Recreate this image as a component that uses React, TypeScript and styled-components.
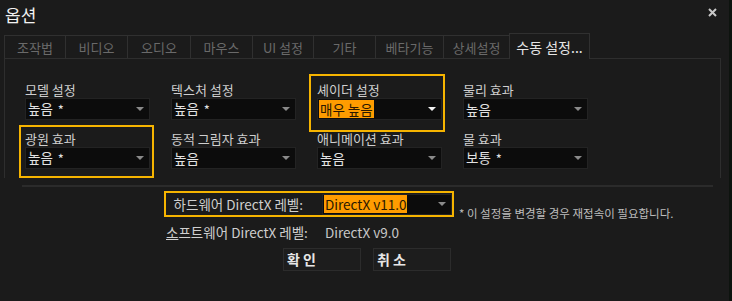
import styled, { createGlobalStyle } from "styled-components";

const GlobalStyle = createGlobalStyle`
  body {
    margin: 0;
    background: #0d130e;
    font-family: "Noto Sans CJK KR", "Noto Sans", sans-serif;
  }
`;

const Window = styled.div`
  width: 729px;
  height: 301px;
  background: #1b1b1b;
  display: flex;
  flex-direction: column;
  overflow: hidden;
`;

const TitleBar = styled.div`
  height: 35px;
  display: flex;
  justify-content: space-between;
  align-items: flex-start;
  padding: 0 12px 0 5px;
  box-sizing: border-box;
`;

const Title = styled.div`
  font-size: 17px;
  line-height: 20px;
  padding-top: 5px;
  color: #f2f2f2;
`;

const Close = styled.svg`
  margin-top: 8px;
`;

const TabBar = styled.div`
  display: flex;
  align-items: flex-end;
  height: 23px;
  margin-left: 4px;
`;

const Tab = styled.div<{ $w: number; $active?: boolean }>`
  width: ${(p) => p.$w}px;
  height: ${(p) => (p.$active ? 26 : 23)}px;
  box-sizing: border-box;
  margin-left: -1px;
  margin-bottom: ${(p) => (p.$active ? -1 : 0)}px;
  position: relative;
  z-index: ${(p) => (p.$active ? 1 : 0)};
  border: 1px solid #303030;
  border-bottom: none;
  background: #1b1b1b;
  display: flex;
  align-items: center;
  justify-content: center;
  font-size: ${(p) => (p.$active ? 14 : 13)}px;
  color: ${(p) => (p.$active ? "#e6e6e6" : "#6a6a6a")};
  white-space: nowrap;
  &:first-child {
    margin-left: 0;
  }
`;

const Panel = styled.div`
  margin: 0 8px 0 4px;
  height: 120px;
  box-sizing: border-box;
  border: 1px solid #2e2e2e;
  border-bottom: none;
  padding: 23px 0 0 20px;
  display: grid;
  grid-template-columns: repeat(4, 125px);
  grid-auto-rows: 38px;
  column-gap: 21px;
  row-gap: 11px;
`;

const Cell = styled.div<{ $frame?: string }>`
  position: relative;
  display: flex;
  flex-direction: column;
  &::after {
    content: "";
    display: ${(p) => (p.$frame ? "block" : "none")};
    position: absolute;
    inset: ${(p) => p.$frame || "0"};
    border: 2px solid #f6b400;
    pointer-events: none;
  }
`;

const Label = styled.div`
  font-size: 13px;
  line-height: 16px;
  color: #cfcfcf;
  white-space: nowrap;
`;

const Select = styled.div<{ $w?: number; $h?: number }>`
  width: ${(p) => (p.$w ? `${p.$w}px` : "100%")};
  height: ${(p) => p.$h || 22}px;
  box-sizing: border-box;
  background: #0c0c0c;
  border: 1px solid #232323;
  display: flex;
  align-items: center;
  justify-content: space-between;
  padding: 0 5px 0 1px;
`;

const Value = styled.span<{ $hot?: boolean }>`
  font-size: 13.5px;
  line-height: 18px;
  color: ${(p) => (p.$hot ? "#2a1800" : "#e2e2e2")};
  background: ${(p) => (p.$hot ? "#ff9c00" : "transparent")};
  padding: 0 1px;
  white-space: nowrap;
`;

const Star = styled.span`
  font-size: 13px;
  margin-left: 5px;
  vertical-align: -1px;
`;

const Arrow = styled.span<{ $bright?: boolean }>`
  width: 0;
  height: 0;
  border-left: 4px solid transparent;
  border-right: 4px solid transparent;
  border-top: 4px solid ${(p) => (p.$bright ? "#f2f2f2" : "#8a8a8a")};
`;

const Separator = styled.div`
  margin: 7px 16px 0 22px;
  height: 2px;
  background: #2b2b2b;
`;

const Lower = styled.div`
  padding-left: 164px;
  display: flex;
  flex-direction: column;
`;

const DxRow = styled.div<{ $gap: number }>`
  display: flex;
  align-items: flex-end;
  margin-top: ${(p) => p.$gap}px;
`;

const DxBox = styled.div<{ $hot?: boolean }>`
  width: 290px;
  height: 26px;
  box-sizing: border-box;
  border: 2px solid ${(p) => (p.$hot ? "#f6b400" : "transparent")};
  display: flex;
  align-items: center;
`;

const DxLabel = styled.div`
  width: 137px;
  text-align: right;
  font-size: 13.5px;
  color: #cfcfcf;
  white-space: nowrap;
  margin-right: 19px;
`;

const Plain = styled.span`
  font-size: 13.5px;
  color: #c8c8c8;
  padding-left: 3px;
`;

const Note = styled.div`
  font-size: 11.5px;
  line-height: 14px;
  color: #bdbdbd;
  margin: 0 0 -3px 5px;
  white-space: nowrap;
`;

const Buttons = styled.div`
  display: flex;
  gap: 12px;
  margin: 3px 0 0 119px;
`;

const Button = styled.div`
  width: 78px;
  height: 23px;
  box-sizing: border-box;
  background: #1d1d1d;
  border: 1px solid #2c2c2c;
  padding-left: 3px;
  font-size: 14px;
  font-weight: 700;
  line-height: 21px;
  color: #e6e6e6;
`;

const tabs: [string, number][] = [
  ["조작법", 62],
  ["비디오", 63],
  ["오디오", 64],
  ["마우스", 63],
  ["UI 설정", 62],
  ["기타", 63],
  ["베타기능", 69],
  ["상세설정", 67],
];

type Opt = { label: string; value: string; star?: boolean; hot?: boolean; frame?: string };

const options: Opt[] = [
  { label: "모델 설정", value: "높음", star: true },
  { label: "텍스처 설정", value: "높음", star: true },
  { label: "셰이더 설정", value: "매우 높음", hot: true, frame: "-8px -3px -12px -8px" },
  { label: "물리 효과", value: "높음" },
  { label: "광원 효과", value: "높음", star: true, frame: "-6px -4px -9px -6px" },
  { label: "동적 그림자 효과", value: "높음" },
  { label: "애니메이션 효과", value: "높음" },
  { label: "물 효과", value: "보통", star: true },
];

export default function App() {
  return (
    <Window>
      <GlobalStyle />
      <TitleBar>
        <Title>옵션</Title>
        <Close width="9" height="9" viewBox="0 0 9 9">
          <path d="M1 1 L8 8 M8 1 L1 8" stroke="#c8c8c8" strokeWidth="2" />
        </Close>
      </TitleBar>
      <TabBar>
        {tabs.map(([name, w]) => (
          <Tab key={name} $w={w}>
            {name}
          </Tab>
        ))}
        <Tab $w={81} $active>
          수동 설정...
        </Tab>
      </TabBar>
      <Panel>
        {options.map((o) => (
          <Cell key={o.label} $frame={o.frame}>
            <Label>{o.label}</Label>
            <Select>
              <Value $hot={o.hot}>
                {o.value}
                {o.star && <Star>*</Star>}
              </Value>
              <Arrow $bright={o.hot} />
            </Select>
          </Cell>
        ))}
      </Panel>
      <Separator />
      <Lower>
        <DxRow $gap={4}>
          <DxBox $hot>
            <DxLabel>하드웨어 DirectX 레벨:</DxLabel>
            <Select $w={130} $h={21}>
              <Value $hot>DirectX v11.0</Value>
              <Arrow />
            </Select>
          </DxBox>
          <Note>* 이 설정을 변경할 경우 재접속이 필요합니다.</Note>
        </DxRow>
        <DxRow $gap={2}>
          <DxBox>
            <DxLabel>
              <u>소</u>프트웨어 DirectX 레벨:
            </DxLabel>
            <Plain>DirectX v9.0</Plain>
          </DxBox>
        </DxRow>
        <Buttons>
          <Button>확 인</Button>
          <Button>취 소</Button>
        </Buttons>
      </Lower>
    </Window>
  );
}
